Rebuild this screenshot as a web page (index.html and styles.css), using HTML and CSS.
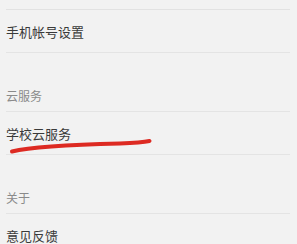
FILE: index.html
```html
<!DOCTYPE html>
<html lang="zh">
<head>
<meta charset="utf-8">
<link rel="stylesheet" href="styles.css">
</head>
<body>
<div class="page">
  <div class="list">
    <div class="top-gap"></div>
    <div class="row">手机帐号设置</div>
    <div class="section">云服务</div>
    <div class="row">学校云服务</div>
    <div class="section">关于</div>
    <div class="row">意见反馈</div>
  </div>
  <svg class="scribble" width="297" height="244" viewBox="0 0 297 244">
    <path d="M12 151.5 C 35 146, 80 144.5, 120 143.5 C 135 143, 145 142, 149.5 141" fill="none" stroke="#dd2a22" stroke-width="4" stroke-linecap="round"/>
  </svg>
</div>
</body>
</html>
```

FILE: styles.css
```css
html, body {
  margin: 0;
  padding: 0;
  background: #f2f2f2;
}
.page {
  position: relative;
  width: 297px;
  height: 244px;
  overflow: hidden;
  font-family: "Noto Sans CJK SC", "Noto Sans", sans-serif;
}
.list {
  display: flex;
  flex-direction: column;
  padding: 0 7px 0 6px;
}
.top-gap {
  height: 9px;
  border-bottom: 1px solid #e2e2e2;
  flex-shrink: 0;
}
.row {
  height: 42px;
  display: flex;
  align-items: center;
  font-size: 13px;
  color: #3a3a3a;
  border-bottom: 1px solid #e4e4e4;
  flex-shrink: 0;
}
.section {
  height: 59px;
  display: flex;
  align-items: flex-end;
  padding-bottom: 7px;
  box-sizing: border-box;
  font-size: 12px;
  color: #8a8a8a;
  border-bottom: 1px solid #e4e4e4;
  flex-shrink: 0;
}
.scribble {
  position: absolute;
  left: 0;
  top: 0;
}
```
